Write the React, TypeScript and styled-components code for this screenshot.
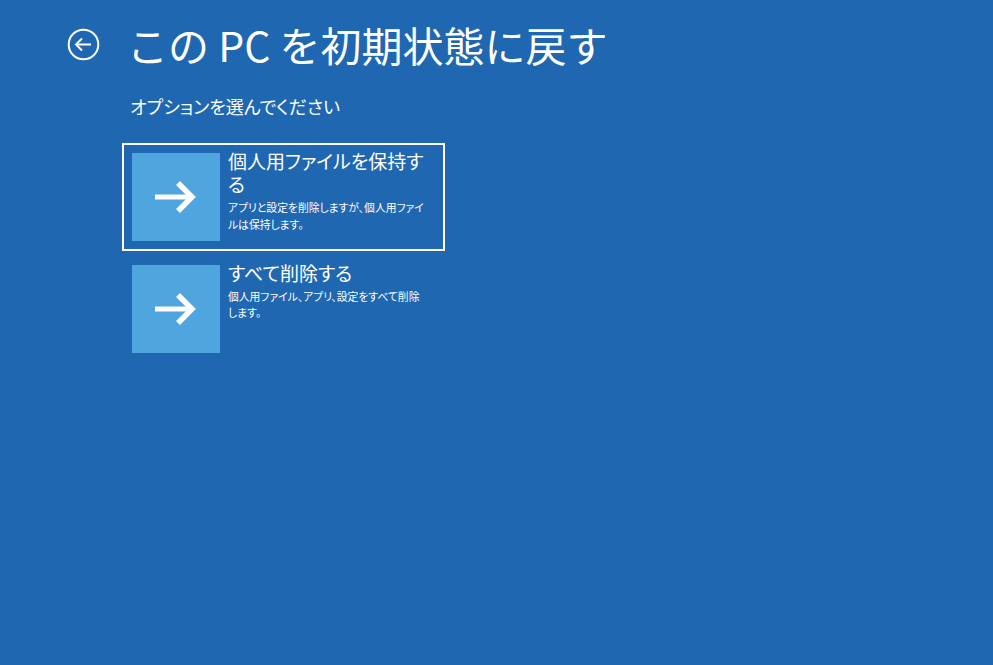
import React from "react";
import styled, { createGlobalStyle } from "styled-components";

const Global = createGlobalStyle`
  html, body { margin: 0; padding: 0; background: #2067b2; }
  body {
    font-family: "Noto Sans CJK JP", "Noto Sans", sans-serif;
    color: #ffffff;
  }
  * { box-sizing: border-box; }
`;

const Page = styled.div`
  width: 993px;
  height: 665px;
  background: #2067b2;
  padding: 20px 0 0 67px;
  overflow: hidden;
`;

const Header = styled.header`
  display: flex;
  align-items: center;
  gap: 27px;
  height: 48px;
`;

const BackButton = styled.button`
  all: unset;
  width: 33px;
  height: 33px;
  display: flex;
  align-items: center;
  justify-content: center;
  cursor: pointer;
`;

const Title = styled.h1`
  margin: 0;
  font-size: 41px;
  line-height: 48px;
  font-weight: 400;
  letter-spacing: 0;
  white-space: nowrap;
`;

const Content = styled.main`
  margin-left: 55px;
  margin-top: 26px;
  display: flex;
  flex-direction: column;
`;

const Subtitle = styled.p`
  margin: 0 0 25px 8px;
  font-size: 18px;
  line-height: 24px;
  font-weight: 400;
  font-feature-settings: "palt";
`;

const List = styled.div`
  display: flex;
  flex-direction: column;
  gap: 4px;
`;

const Card = styled.div<{ $selected?: boolean }>`
  width: 323px;
  display: flex;
  align-items: flex-start;
  gap: 8px;
  padding: 8px;
  border: 2px solid ${(p) => (p.$selected ? "#ffffff" : "transparent")};
  cursor: pointer;
`;

const Tile = styled.div`
  flex: 0 0 88px;
  width: 88px;
  height: 88px;
  background: #4fa5de;
  display: flex;
  align-items: center;
  justify-content: center;
`;

const Text = styled.div`
  margin-top: -4px;
  flex: 1;
  min-width: 0;
  font-feature-settings: "palt";
`;

const CardTitle = styled.div`
  font-size: 19px;
  line-height: 23px;
`;

const CardDesc = styled.div<{ $lh: number }>`
  margin-top: 4px;
  font-size: 10.8px;
  line-height: ${(p) => p.$lh}px;
  padding-right: 9px;
`;

const Arrow = () => (
  <svg width="44" height="34" viewBox="0 0 44 34" fill="none">
    <path d="M1 17 H38" stroke="#fff" strokeWidth="5" />
    <path d="M24 3 L38 17 L24 31" stroke="#fff" strokeWidth="5.5" strokeLinejoin="miter" />
  </svg>
);

const BackIcon = () => (
  <svg width="33" height="33" viewBox="0 0 33 33" fill="none">
    <circle cx="16.5" cy="16.5" r="14.8" stroke="#fff" strokeWidth="2" />
    <path d="M9 16.5 H24" stroke="#fff" strokeWidth="2" />
    <path d="M15 10.5 L9 16.5 L15 22.5" stroke="#fff" strokeWidth="2" />
  </svg>
);

const options = [
  {
    title: "個人用ファイルを保持する",
    desc: "アプリと設定を削除しますが、個人用ファイルは保持します。",
    selected: true,
    lh: 17,
  },
  {
    title: "すべて削除する",
    desc: "個人用ファイル、アプリ、設定をすべて削除します。",
    selected: false,
    lh: 16,
  },
];

export default function App() {
  return (
    <>
      <Global />
      <Page>
        <Header>
          <BackButton aria-label="戻る">
            <BackIcon />
          </BackButton>
          <Title>この PC を初期状態に戻す</Title>
        </Header>
        <Content>
          <Subtitle>オプションを選んでください</Subtitle>
          <List>
            {options.map((o) => (
              <Card key={o.title} $selected={o.selected}>
                <Tile>
                  <Arrow />
                </Tile>
                <Text>
                  <CardTitle>{o.title}</CardTitle>
                  <CardDesc $lh={o.lh}>{o.desc}</CardDesc>
                </Text>
              </Card>
            ))}
          </List>
        </Content>
      </Page>
    </>
  );
}
